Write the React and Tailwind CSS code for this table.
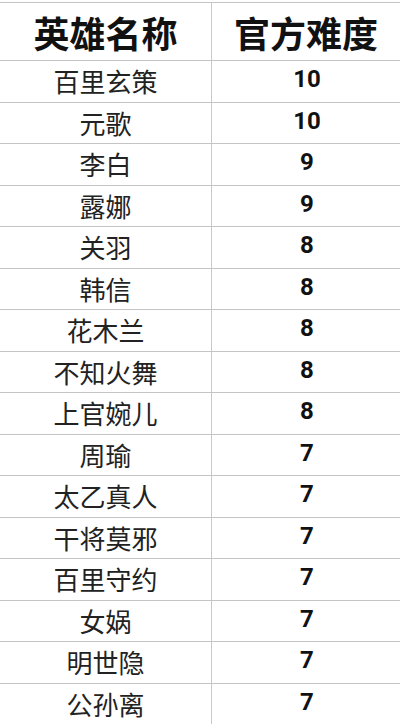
const rows = [
  ["百里玄策", "10"],
  ["元歌", "10"],
  ["李白", "9"],
  ["露娜", "9"],
  ["关羽", "8"],
  ["韩信", "8"],
  ["花木兰", "8"],
  ["不知火舞", "8"],
  ["上官婉儿", "8"],
  ["周瑜", "7"],
  ["太乙真人", "7"],
  ["干将莫邪", "7"],
  ["百里守约", "7"],
  ["女娲", "7"],
  ["明世隐", "7"],
  ["公孙离", "7"],
];

export default function App() {
  return (
    <div className="w-[400px] h-[724px] overflow-hidden bg-white pt-[2px] text-[#1c1c1c]" style={{ fontFamily: '"Noto Sans CJK SC", "Noto Sans", sans-serif' }}>
      <div className="border-t border-[#c4c4c4]">
        <div className="grid grid-cols-[212px_1fr] h-[58px] border-b border-[#c4c4c4]">
          <div className="flex items-center justify-center border-r border-[#cacaca] text-[36px] font-bold text-[#111] leading-none">英雄名称</div>
          <div className="flex items-center justify-center text-[36px] font-bold text-[#111] leading-none">官方难度</div>
        </div>
        {rows.map(([name, lv], i) => (
          <div key={i} className="grid grid-cols-[212px_1fr] h-[41.5px] border-b border-[#c4c4c4]">
            <div className="flex items-center justify-center border-r border-[#cacaca] text-[26px] leading-none text-[#222]">{name}</div>
            <div className="flex items-center justify-center text-[24px] font-bold leading-none text-[#111] pb-[4px] pl-[2px]" style={{ fontFamily: 'Roboto, "Noto Sans", sans-serif' }}>{lv}</div>
          </div>
        ))}
      </div>
    </div>
  );
}
